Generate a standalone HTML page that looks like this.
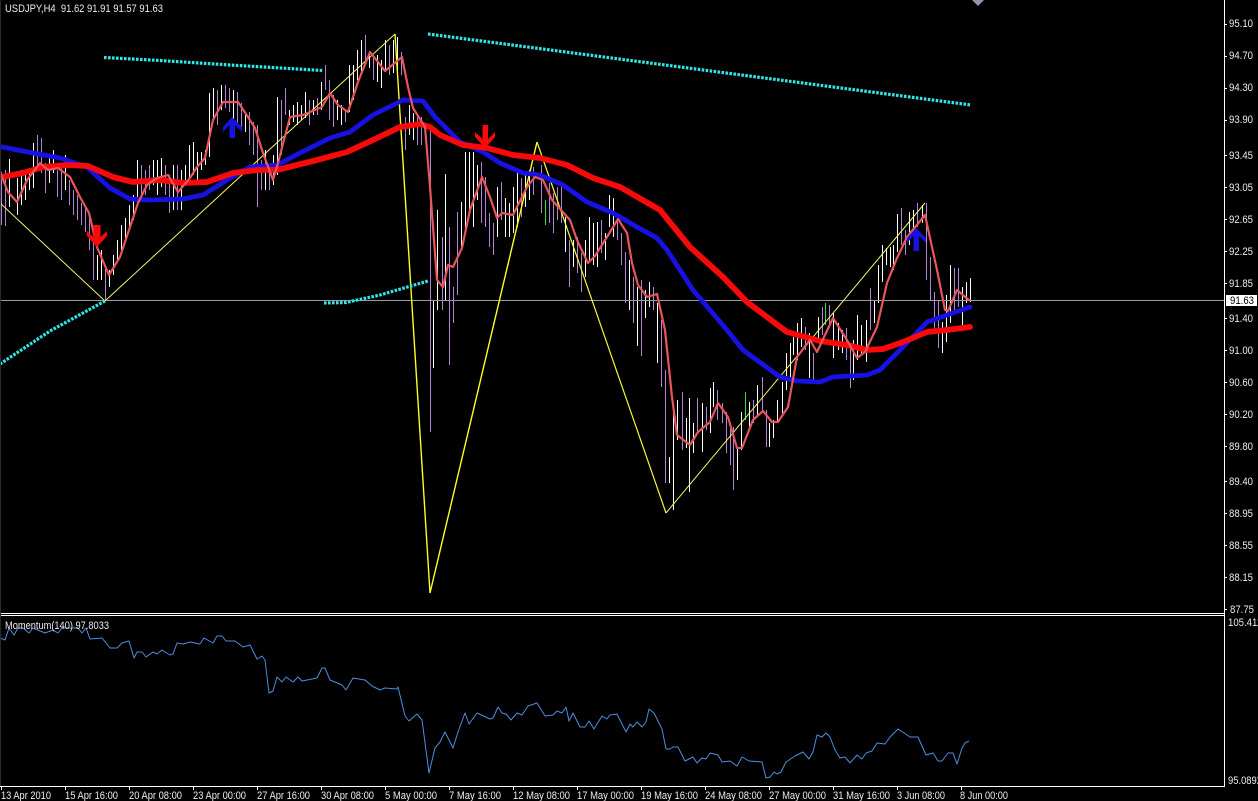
<!DOCTYPE html>
<html lang="en"><head><meta charset="utf-8"><title>USDJPY,H4</title>
<style>
html,body{margin:0;padding:0;background:#000;width:1258px;height:801px;overflow:hidden}
svg{display:block}
text{font-family:"Liberation Sans",sans-serif;font-size:11px;fill:#ececec}
</style></head><body>
<svg width="1258" height="801" viewBox="0 0 1258 801" xmlns="http://www.w3.org/2000/svg">
<rect width="1258" height="801" fill="#000"/>
<polygon points="972,0 984,0 978,6" fill="#8d97a8"/>

<g transform="translate(0.5,0)">
<!-- purple bars -->
<path fill="none" stroke="#b284d6" stroke-width="1" d="M1 172V225M5 170V226M37 135V170M41 138V173M45 163V193M57 170V197M61 163V200M69 180V205M73 190V215M77 195V220M81 203V225M85 208V232M89 215V250M93 243V280M105 265V300M141 165V195M145 170V195M149 165V190M165 165V195M169 175V213M177 165V210M217 90V125M225 85V108M229 88V112M237 92V125M241 103V130M249 112V145M253 122V155M257 125V207M261 160V190M269 165V190M281 100V155M285 88V115M309 100V125M317 98V115M325 65V90M329 80V120M333 95V127M345 110V122M365 35V65M373 58V80M389 45V75M401 52V75M405 117V150M417 115V145M421 117V145M430 125V432M442 237V310M449 227V365M453 287V323M457 212V295M481 162V223M485 177V227M489 213V247M493 223V255M501 182V220M521 178V217M533 167V195M541 165V213M549 183V223M553 193V233M557 187V220M561 187V223M569 240V287M577 237V273M581 253V292M601 220V253M617 220V240M621 233V265M625 252V303M633 277V323M641 280V356M653 287V310M661 320V387M665 370V483M682 392V450M697 398V433M706 407V430M717 390V420M722 403V423M726 412V453M730 423V465M733 427V490M753 400V423M762 377V412M766 410V447M805 327V350M813 353V383M822 307V335M829 305V327M846 328V360M850 347V388M870 288V330M901 208V245M905 230V255M917 203V227M926 203V280M930 257V300M934 292V332M938 300V348M954 268V313M958 268V307"/>
<!-- white bars -->
<path fill="none" stroke="#ffffff" stroke-width="1" d="M9 159V207M17 178V215M21 170V205M25 172V200M29 168V190M33 143V188M49 157V183M53 150V173M65 155V190M97 255V280M101 250V280M109 270V287M113 255V275M117 240V262M121 225V250M125 218V242M129 205V230M133 195V220M137 160V205M153 160V185M157 160V195M161 158V187M173 165V210M181 170V210M185 165V185M189 145V180M193 142V175M197 152V180M201 152V170M205 150V165M209 93V157M213 88V120M221 85V110M233 90V120M245 115V132M265 150V190M273 155V185M277 97V175M289 110V125M293 105V122M297 102V125M301 105V120M305 92V118M313 100V115M321 82V110M337 100V120M341 105V125M349 65V112M353 65V100M357 50V80M361 40V72M369 55V68M377 55V82M381 60V88M385 40V72M393 40V73M397 37V75M409 105V135M413 113V140M433 300V368M437 210V310M445 174V300M461 202V250M465 152V228M469 152V213M473 152V227M477 165V200M497 187V237M505 198V237M509 203V237M513 187V233M517 173V227M525 175V207M529 170V200M565 217V252M573 240V267M585 240V277M589 217V260M593 223V265M597 222V267M605 233V260M609 195V227M613 198V237M629 260V310M637 287V346M645 290V318M649 282V307M657 303V363M669 457V483M673 403V510M677 400V440M686 418V448M689 398V492M693 423V453M702 403V452M710 388V433M713 382V407M737 448V480M741 412V450M749 402V430M757 385V417M769 423V447M773 420V438M777 400V423M782 382V413M786 353V390M790 343V377M793 337V355M797 323V360M801 318V347M809 333V378M818 317V340M833 313V358M838 323V350M842 330V353M853 340V380M857 315V360M861 325V353M866 320V362M874 300V323M878 265V303M882 245V282M886 248V265M890 247V267M893 245V270M897 214V252M909 212V245M913 210V233M922 205V223M942 322V353M946 295V342M950 265V323M962 287V325M966 282V303M970 278V302"/>
<!-- green bars -->
<path fill="none" stroke="#2fe044" stroke-width="1" d="M545 200V225M745 392V420M825 303V325"/>
</g>

<!-- current price line -->
<path d="M0 300.5H1225" stroke="#9c9ca4" stroke-width="1"/>

<!-- zigzag -->
<polyline fill="none" stroke="#f7f76a" stroke-width="1" points="0,203 105,301 395,34"/>
<polyline fill="none" stroke="#ffff22" stroke-width="1.4" points="395,34 430,593 537,142"/>
<polyline fill="none" stroke="#f8f83a" stroke-width="1.2" points="537,142 666,513"/>
<polyline fill="none" stroke="#f7f76a" stroke-width="1" points="666,513 925,203"/>

<!-- cyan dotted lines -->
<g fill="none" stroke="#30e8e8" stroke-width="3.2" stroke-dasharray="2.6 1.4">
<path d="M104 57.5L160 60.5L230 65L323 70.5"/>
<path d="M428 34L971 105"/>
<path d="M0 364L50 331L105 301"/>
<path d="M324 303L346 302.5L380 295L428 281"/>
</g>

<!-- blue MA -->
<polyline fill="none" stroke="#1712e2" stroke-width="4.8" stroke-linejoin="round" stroke-linecap="round" points="2,147 33,153 60,158 87,167 110,188 130,199 150,200 183,199 203,195 227,180 250,167 277,165 300,153 330,138 350,132 373,115 397,103 403,100 423,101 435,117 460,142 483,152 500,163 523,173 540,175 563,185 587,202 613,213 637,227 657,238 667,250 693,290 727,330 743,350 780,377 797,381 820,382 833,377 867,375 880,370 900,350 927,322 947,315 970,307"/>
<!-- red MA -->
<polyline fill="none" stroke="#f80a0a" stroke-width="5.8" stroke-linejoin="round" stroke-linecap="round" points="2,177 23,173 43,167 67,165 88,166 113,177 133,182 160,180 183,183 207,182 233,173 257,170 277,170 317,160 347,152 373,140 400,127 420,124 430,127 440,135 463,145 487,148 513,155 540,158 567,165 593,178 620,187 660,210 690,247 723,277 747,302 787,332 820,341 847,345 867,350 883,349 903,342 927,332 947,330 970,327"/>
<!-- pink fast MA -->
<polyline fill="none" stroke="#e8555a" stroke-width="2.2" stroke-linejoin="round" points="0,172 8,192 17,202 27,180 40,163 48,170 58,168 70,177 80,197 89,213 97,247 109,275 120,257 130,227 138,203 147,185 157,178 168,175 178,192 190,178 197,167 205,158 213,120 223,102 238,102 248,117 255,128 263,153 273,180 278,163 290,117 303,115 322,107 330,93 338,105 348,112 358,82 370,52 385,71 402,57 408,87 413,108 425,127 430,187 437,280 443,287 448,265 453,267 462,248 470,210 482,177 490,197 497,218 502,213 513,215 527,187 535,177 543,180 552,200 570,220 577,240 588,263 595,256 607,237 618,219 627,233 632,263 638,285 647,297 657,294 665,330 672,397 677,435 690,445 698,432 710,422 718,403 728,417 737,448 742,448 753,420 763,411 772,422 778,422 788,407 797,357 810,340 817,352 833,318 847,340 857,358 865,352 877,327 887,283 897,258 907,237 925,215 937,270 945,310 948,311 957,290 970,301"/>

<!-- arrows -->
<polygon fill="#f80a0a" points="97,247 107,236 107,231 100.5,237 100.5,225 93.5,225 93.5,237 87,231 87,236"/>
<polygon fill="#1712e2" points="232,117 242,127 242,132 235,125 235,138 229.5,138 229.5,125 223,132 223,127"/>
<polygon fill="#f80a0a" points="485,148 495,137 495,132 488,139 488,125 482.5,125 482.5,139 475,132 475,137"/>
<polygon fill="#1712e2" points="916,228 926,238 926,243 919,236 919,251 913.5,251 913.5,236 907,243 907,238"/>

<!-- momentum -->
<polyline fill="none" stroke="#4f8ce0" stroke-width="1" stroke-linejoin="round" points="0,638 5,640 9,628 14,635 18,628 23,628 29,633 33,628 45,633 53,630 58,633 62,628 78,628 82,633 86,628 90,639 102,638 110,648 117,648 122,643 129,641 134,658 137,652 142,652 146,657 153,652 157,654 162,650 170,655 173,654 177,643 183,644 190,642 200,644 204,638 213,643 217,636 222,636 226,641 235,641 243,647 250,645 257,659 262,656 265,660 269,693 273,691 277,677 282,682 286,677 293,682 298,677 302,681 317,678 322,668 325,668 330,680 342,685 346,690 353,678 365,680 372,686 380,690 385,688 397,689 398,687 405,716 409,721 417,714 422,720 429,773 435,748 440,742 445,732 453,748 458,732 465,713 469,724 477,713 490,719 493,718 498,707 502,713 506,714 511,720 517,713 522,715 528,706 537,703 545,716 553,715 557,711 562,713 566,707 569,721 573,713 580,727 585,727 589,721 594,729 602,716 607,719 610,715 617,714 626,732 630,724 633,727 637,722 642,727 646,722 649,709 654,713 662,729 666,749 670,749 673,747 678,747 685,761 693,757 697,763 702,758 706,759 710,753 718,755 722,762 730,761 737,766 742,757 749,761 762,762 766,778 770,777 774,772 777,774 781,772 786,762 795,756 803,752 809,759 813,752 817,735 822,737 826,733 830,737 835,750 840,758 845,757 850,763 857,755 862,759 866,753 872,751 877,743 885,744 890,737 898,729 910,737 918,737 926,755 933,753 938,761 942,761 948,753 953,753 957,764 962,748 965,743 969,741"/>

<!-- frames -->
<path fill="none" stroke="#fff" stroke-width="1" d="M1224.5 0V786.5M0 613.5H1225M0 615.5H1225M0 786.5H1225"/>
<path fill="none" stroke="#2a2a2a" stroke-width="1" d="M0.5 0V786"/>
<!-- ticks -->
<path fill="none" stroke="#fff" stroke-width="1" d="M1225 24.5H1227M1225 56.5H1227M1225 88.5H1227M1225 120.5H1227M1225 155.5H1227M1225 187.5H1227M1225 219.5H1227M1225 251.5H1227M1225 283.5H1227M1225 318.5H1227M1225 350.5H1227M1225 382.5H1227M1225 414.5H1227M1225 446.5H1227M1225 481.5H1227M1225 513.5H1227M1225 545.5H1227M1225 577.5H1227M1225 609.5H1227M1.5 787V790M65.5 787V790M129.5 787V790M193.5 787V790M257.5 787V790M321.5 787V790M385.5 787V790M449.5 787V790M513.5 787V790M577.5 787V790M641.5 787V790M705.5 787V790M769.5 787V790M833.5 787V790M897.5 787V790M961.5 787V790"/>

<!-- text -->
<text x="5" y="12" textLength="158" lengthAdjust="spacingAndGlyphs" xml:space="preserve">USDJPY,H4  91.62 91.91 91.57 91.63</text>
<text x="5" y="629" textLength="104" lengthAdjust="spacingAndGlyphs">Momentum(140) 97.8033</text>
<g>
<text x="1229" y="27" textLength="24" lengthAdjust="spacingAndGlyphs">95.10</text>
<text x="1229" y="59" textLength="24" lengthAdjust="spacingAndGlyphs">94.70</text>
<text x="1229" y="91" textLength="24" lengthAdjust="spacingAndGlyphs">94.30</text>
<text x="1229" y="123" textLength="24" lengthAdjust="spacingAndGlyphs">93.90</text>
<text x="1229" y="159" textLength="24" lengthAdjust="spacingAndGlyphs">93.45</text>
<text x="1229" y="191" textLength="24" lengthAdjust="spacingAndGlyphs">93.05</text>
<text x="1229" y="223" textLength="24" lengthAdjust="spacingAndGlyphs">92.65</text>
<text x="1229" y="255" textLength="24" lengthAdjust="spacingAndGlyphs">92.25</text>
<text x="1229" y="287" textLength="24" lengthAdjust="spacingAndGlyphs">91.85</text>
<text x="1229" y="322" textLength="24" lengthAdjust="spacingAndGlyphs">91.40</text>
<text x="1229" y="354" textLength="24" lengthAdjust="spacingAndGlyphs">91.00</text>
<text x="1229" y="386" textLength="24" lengthAdjust="spacingAndGlyphs">90.60</text>
<text x="1229" y="418" textLength="24" lengthAdjust="spacingAndGlyphs">90.20</text>
<text x="1229" y="450" textLength="24" lengthAdjust="spacingAndGlyphs">89.80</text>
<text x="1229" y="485" textLength="24" lengthAdjust="spacingAndGlyphs">89.40</text>
<text x="1229" y="517" textLength="24" lengthAdjust="spacingAndGlyphs">88.95</text>
<text x="1229" y="549" textLength="24" lengthAdjust="spacingAndGlyphs">88.55</text>
<text x="1229" y="581" textLength="24" lengthAdjust="spacingAndGlyphs">88.15</text>
<text x="1230" y="613" textLength="24" lengthAdjust="spacingAndGlyphs">87.75</text>
<text x="1228" y="626" textLength="34" lengthAdjust="spacingAndGlyphs">105.411</text>
<text x="1228" y="784" textLength="34" lengthAdjust="spacingAndGlyphs">95.0892</text>
</g>
<rect x="1226" y="295" width="31" height="11" fill="#fff"/>
<text x="1230" y="304" textLength="24" lengthAdjust="spacingAndGlyphs" style="fill:#000">91.63</text>
<g>
<text x="1" y="799" textLength="50" lengthAdjust="spacingAndGlyphs">13 Apr 2010</text>
<text x="65" y="799" textLength="53" lengthAdjust="spacingAndGlyphs">15 Apr 16:00</text>
<text x="129" y="799" textLength="53" lengthAdjust="spacingAndGlyphs">20 Apr 08:00</text>
<text x="193" y="799" textLength="53" lengthAdjust="spacingAndGlyphs">23 Apr 00:00</text>
<text x="257" y="799" textLength="53" lengthAdjust="spacingAndGlyphs">27 Apr 16:00</text>
<text x="321" y="799" textLength="53" lengthAdjust="spacingAndGlyphs">30 Apr 08:00</text>
<text x="385" y="799" textLength="52" lengthAdjust="spacingAndGlyphs">5 May 00:00</text>
<text x="449" y="799" textLength="52" lengthAdjust="spacingAndGlyphs">7 May 16:00</text>
<text x="513" y="799" textLength="57" lengthAdjust="spacingAndGlyphs">12 May 08:00</text>
<text x="577" y="799" textLength="57" lengthAdjust="spacingAndGlyphs">17 May 00:00</text>
<text x="641" y="799" textLength="57" lengthAdjust="spacingAndGlyphs">19 May 16:00</text>
<text x="705" y="799" textLength="57" lengthAdjust="spacingAndGlyphs">24 May 08:00</text>
<text x="769" y="799" textLength="57" lengthAdjust="spacingAndGlyphs">27 May 00:00</text>
<text x="833" y="799" textLength="57" lengthAdjust="spacingAndGlyphs">31 May 16:00</text>
<text x="897" y="799" textLength="48" lengthAdjust="spacingAndGlyphs">3 Jun 08:00</text>
<text x="960" y="799" textLength="48" lengthAdjust="spacingAndGlyphs">8 Jun 00:00</text>
</g>
</svg>
</body></html>
